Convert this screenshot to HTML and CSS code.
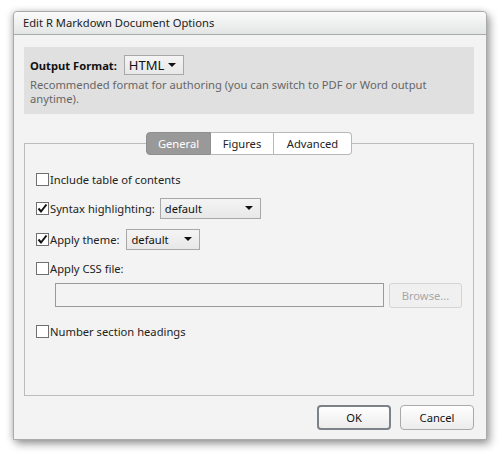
FILE: index.html
```html
<!DOCTYPE html>
<html>
<head>
<meta charset="utf-8">
<link rel="stylesheet" href="styles.css">
</head>
<body>
<div class="dialog">
  <div class="titlebar">Edit R Markdown Document Options</div>
  <div class="content">
    <div class="format">
      <div class="format-row">
        <span class="format-label">Output Format:</span>
        <span class="select sel-html">HTML<span class="arrow"></span></span>
      </div>
      <div class="format-desc">Recommended format for authoring (you can switch to PDF or Word output anytime).</div>
    </div>
    <div class="tabs">
      <span class="tab active">General</span><span class="tab">Figures</span><span class="tab last">Advanced</span>
    </div>
    <div class="panel">
      <div class="row r1"><span class="cb"></span><span class="lbl">Include table of contents</span></div>
      <div class="row r2"><span class="cb checked"><svg viewBox="0 0 13 13" width="13" height="13"><path d="M2.5 6.5 L5 9.5 L10.5 2.5" fill="none" stroke="#111" stroke-width="2"/></svg></span><span class="lbl">Syntax highlighting:</span><span class="select sel-syntax">default<span class="arrow"></span></span></div>
      <div class="row r3"><span class="cb checked"><svg viewBox="0 0 13 13" width="13" height="13"><path d="M2.5 6.5 L5 9.5 L10.5 2.5" fill="none" stroke="#111" stroke-width="2"/></svg></span><span class="lbl">Apply theme:</span><span class="select sel-theme">default<span class="arrow"></span></span></div>
      <div class="row r4"><span class="cb"></span><span class="lbl">Apply CSS file:</span></div>
      <div class="css-row"><span class="textbox"></span><span class="browse">Browse...</span></div>
      <div class="row r5"><span class="cb"></span><span class="lbl">Number section headings</span></div>
    </div>
    <div class="buttons">
      <span class="btn ok">OK</span><span class="btn">Cancel</span>
    </div>
  </div>
</div>
</body>
</html>
```
FILE: styles.css
```css
html, body {
  margin: 0;
  padding: 0;
  background: #ffffff;
  width: 502px;
  height: 454px;
  overflow: hidden;
}
body {
  font-family: "Noto Sans", "Open Sans", sans-serif;
  font-size: 11.2px;
  color: #222;
}
.dialog {
  margin: 11px 0 0 13px;
  width: 474px;
  height: 429px;
  background: #f2f3f2;
  border: 1px solid #a9aaaa;
  box-sizing: border-box;
  border-radius: 4px 4px 0 0;
  box-shadow: 3px 4px 8px rgba(0,0,0,0.38), -2px 0 6px rgba(0,0,0,0.15);
  display: flex;
  flex-direction: column;
}
.titlebar {
  height: 22px;
  line-height: 22px;
  padding-left: 9px;
  background: linear-gradient(#fbfbfb, #e4e5e5);
  border-bottom: 1px solid #a9aaaa;
  border-radius: 4px 4px 0 0;
  color: #222;
}
.content {
  padding: 12px 12px 0 10px;
  display: flex;
  flex-direction: column;
}
.format {
  background: #e0e0e0;
  height: 67px;
  box-sizing: border-box;
  padding: 8px 6px 0 6px;
}
.format-row {
  display: flex;
  align-items: center;
  gap: 7px;
}
.format-label {
  font-weight: bold;
  color: #111;
}
.select {
  display: inline-flex;
  align-items: center;
  box-sizing: border-box;
  border: 1px solid #a8a8a8;
  background: linear-gradient(#f4f4f4, #e8e8e8);
  padding-left: 4px;
  position: relative;
  color: #111;
}
.arrow {
  position: absolute;
  right: 7px;
  top: 50%;
  margin-top: -2px;
  width: 0;
  height: 0;
  border-left: 4px solid transparent;
  border-right: 4px solid transparent;
  border-top: 4px solid #111;
}
.sel-html {
  width: 60px;
  height: 20px;
  font-size: 13px;
}
.format-desc {
  color: #666;
  margin-top: 3px;
  line-height: 14px;
}
.tabs {
  display: flex;
  justify-content: center;
  margin-top: 18px;
  margin-bottom: -12px;
  position: relative;
  z-index: 1;
}
.tab {
  height: 23px;
  box-sizing: border-box;
  line-height: 21px;
  border: 1px solid #b8b8b8;
  border-left: none;
  background: #ffffff;
  text-align: center;
  color: #222;
}
.tab:first-child { border-left: 1px solid #b8b8b8; border-radius: 4px 0 0 4px; width: 65px; }
.tab:nth-child(2) { width: 63px; }
.tab.last { border-radius: 0 4px 4px 0; width: 78px; }
.tab.active {
  background: #999999;
  border-color: #8f8f8f;
  color: #ffffff;
}
.panel {
  border: 1px solid #bcbcbc;
  height: 253px;
  box-sizing: border-box;
  padding: 28px 0 0 11px;
  width: 450px;
}
.row {
  display: flex;
  align-items: center;
  height: 14px;
}
.r2 { margin-top: 15px; }
.r3 { margin-top: 17px; }
.r4 { margin-top: 15px; }
.r5 { margin-top: 16px; }
.cb {
  width: 13px;
  height: 13px;
  box-sizing: border-box;
  border: 1px solid #707070;
  background: #fff;
  margin-right: 1px;
  display: inline-block;
  position: relative;
}
.cb svg {
  position: absolute;
  left: -1px;
  top: -1px;
}
.lbl {
  color: #222;
}
.sel-syntax {
  width: 101px;
  height: 21px;
  margin-left: 5px;
}
.sel-theme {
  width: 74px;
  height: 21px;
  margin-left: 7px;
}
.css-row {
  display: flex;
  align-items: center;
  margin-top: 7px;
  padding-left: 19px;
  height: 26px;
}
.textbox {
  width: 329px;
  height: 24px;
  box-sizing: border-box;
  border: 1px solid #9a9a9a;
  background: #f2f3f2;
}
.browse {
  margin-left: 5px;
  width: 73px;
  height: 25px;
  box-sizing: border-box;
  border: 1px solid #d4d4d4;
  border-radius: 3px;
  background: #f0f0f0;
  color: #a8a8a8;
  display: flex;
  align-items: center;
  justify-content: center;
}
.buttons {
  display: flex;
  justify-content: flex-end;
  gap: 9px;
  margin-top: 9px;
}
.btn {
  width: 74px;
  height: 25px;
  box-sizing: border-box;
  border: 1px solid #a9a9a9;
  border-radius: 4px;
  background: linear-gradient(#ffffff, #ececec);
  display: flex;
  align-items: center;
  justify-content: center;
  color: #111;
}
.btn.ok {
  border: 2px solid #7c8288;
}
```
